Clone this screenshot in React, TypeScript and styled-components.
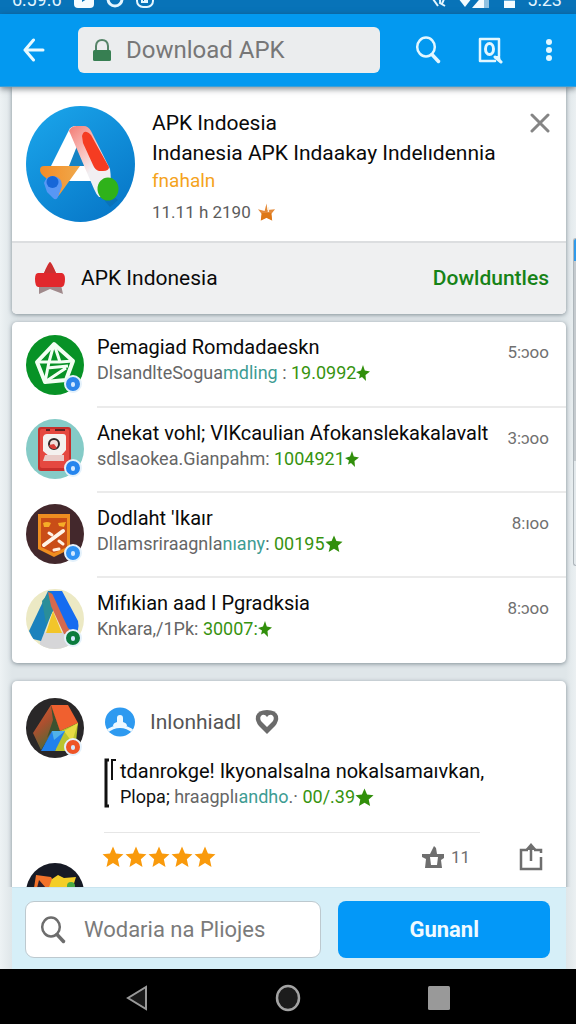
import React from "react";
import styled, { createGlobalStyle } from "styled-components";

const GlobalStyle = createGlobalStyle`
  * { box-sizing: border-box; }
  html, body { margin: 0; padding: 0; }
  body { font-family: Roboto, "Liberation Sans", sans-serif; background: #e9eff1; color: #0a0a0a; }
  button, input { font: inherit; }
  h2, h3, p, ul { margin: 0; padding: 0; font-weight: 400; }
  ul { list-style: none; }
`;

const Page = styled.div`
  position: relative;
  display: flex;
  flex-direction: column;
  height: 100vh;
  overflow: hidden;
`;

const StatusBar = styled.div`
  display: flex;
  align-items: flex-end;
  justify-content: space-between;
  flex: none;
  height: 14px;
  padding: 0 14px 6px 12px;
  overflow: hidden;
  background: #0873b8;
  color: #e4f6ff;
  font-size: 18px;
  line-height: 16px;
`;

const StatusGroup = styled.div`
  display: flex;
  align-items: flex-end;
  gap: 12px;
  svg { display: block; flex: none; }
`;

const AppBar = styled.header`
  position: relative;
  z-index: 1;
  display: flex;
  align-items: center;
  flex: none;
  height: 73px;
  padding: 0 17px 0 23px;
  background: #0399f0;
  border-bottom: 1px solid #3b9fd8;
  box-shadow: 0 2px 6px rgba(30, 40, 50, 0.55);
`;

const IconButton = styled.button`
  display: block;
  flex: none;
  padding: 0;
  border: 0;
  background: none;
  color: inherit;
  cursor: pointer;
  svg { display: block; }
`;

const BackButton = styled(IconButton)`
  color: #e9faff;
`;

const AddressField = styled.label`
  display: flex;
  align-items: center;
  flex: 1;
  min-width: 0;
  gap: 14px;
  height: 46px;
  margin: 0 35px 0 33px;
  padding: 0 14px;
  border-radius: 6px;
  background: #ebedee;
  svg { flex: none; }
`;

const TextInput = styled.input<{ $size: number; $color: string }>`
  flex: 1;
  min-width: 0;
  padding: 0;
  border: 0;
  outline: 0;
  background: none;
  font-size: ${(p) => p.$size}px;
  color: ${(p) => p.$color};
  &::placeholder { color: ${(p) => p.$color}; opacity: 1; }
`;

const BarActions = styled.div`
  display: flex;
  align-items: center;
  gap: 36px;
  color: #e2f7ff;
`;

const Content = styled.main`
  display: flex;
  flex-direction: column;
  flex: 1;
  min-height: 0;
  padding: 0 10px 0 12px;
  overflow: hidden;
  background: linear-gradient(90deg, #edf2f4 0, #dfe6e9 12px, #dfe6e9 calc(100% - 10px), #ebf0f2 100%);
`;

const Card = styled.section<{ $gap?: number; $flush?: boolean }>`
  flex: none;
  margin-bottom: ${(p) => p.$gap ?? 0}px;
  border-radius: ${(p) => (p.$flush ? "0 0 5px 5px" : "5px")};
  background: #fff;
  box-shadow: 0 1px 4px rgba(70, 85, 95, 0.6);
  overflow: hidden;
`;

const Hero = styled.div`
  display: flex;
  align-items: flex-start;
  height: 154px;
  padding: 19px 16px 0 14px;
`;

const HeroText = styled.div`
  flex: 1;
  min-width: 0;
  margin-left: 17px;
  padding-top: 2px;
  white-space: nowrap;
`;

const HeroLine = styled.h2`
  font-size: 21px;
  line-height: 30px;
`;

const HeroTag = styled.p`
  color: #f5a31c;
  font-size: 19px;
  line-height: 26px;
`;

const HeroMeta = styled.p`
  display: flex;
  align-items: center;
  gap: 6px;
  margin-top: 3px;
  color: #5c5c5c;
  font-size: 17px;
  line-height: 30px;
`;

const CloseButton = styled(IconButton)`
  margin-top: 7px;
  color: #858585;
`;

const SourceBar = styled.div`
  display: flex;
  align-items: center;
  height: 73px;
  padding: 0 17px 2px 22px;
  border-top: 2px solid #dcdee0;
  background: #eff0f1;
  font-size: 21px;
`;

const SourceName = styled.span`
  flex: 1;
  margin-left: 15px;
`;

const DownloadsLink = styled.a`
  color: #178317;
  font-weight: 500;
  text-decoration: none;
`;

const Row = styled.li`
  display: flex;
  padding-left: 14px;
`;

const AvatarBox = styled.div`
  position: relative;
  flex: none;
  width: 58px;
  height: 60px;
  margin-top: 13px;
  svg { display: block; }
  ${Row}:not(:first-child) & { margin-top: 11px; }
`;

const Badge = styled.span<{ $color: string }>`
  position: absolute;
  right: 2px;
  bottom: 2px;
  display: flex;
  align-items: center;
  justify-content: center;
  width: 18px;
  height: 18px;
  border: 2px solid #e4f1fb;
  border-radius: 50%;
  background: ${(p) => p.$color};
  &::after { content: ""; width: 4px; height: 5px; border-radius: 2px; background: #d3e9ff; }
`;

const RowBody = styled.div`
  display: flex;
  flex: 1;
  min-width: 0;
  height: 86px;
  margin-left: 13px;
  padding: 12px 17px 0 0;
  border-bottom: 2px solid #ebebeb;
  ${Row}:not(:first-child) & { height: 85px; }
  ${Row}:last-child & { border-bottom: 0; }
`;

const RowText = styled.div`
  flex: 1;
  min-width: 0;
  white-space: nowrap;
`;

const Title = styled.h3`
  font-size: 20px;
  line-height: 26px;
`;

const Subtitle = styled.p`
  display: flex;
  align-items: center;
  color: #666;
  font-size: 18px;
  line-height: 26px;
  white-space: pre;
  svg { flex: none; }
`;

const Teal = styled.span`
  color: #3d9c93;
`;

const Dark = styled.span`
  color: #111;
`;

const Count = styled.span`
  color: #37930f;
`;

const Time = styled.time`
  padding-top: 6px;
  color: #707070;
  font-size: 17px;
  line-height: 24px;
`;

const Review = styled.article`
  display: flex;
  padding: 4px 15px 0 14px;
`;

const ReviewBody = styled.div`
  flex: 1;
  min-width: 0;
  margin-left: 20px;
  padding-top: 20px;
`;

const Author = styled.div`
  display: flex;
  align-items: center;
  gap: 14px;
  height: 34px;
  color: #555;
  font-size: 21px;
`;

const Quote = styled.div`
  display: flex;
  gap: 4px;
  margin-top: 19px;
  white-space: nowrap;
  svg { flex: none; }
`;

const Rule = styled.hr`
  height: 1px;
  margin: 22px 71px 0 0;
  border: 0;
  background: #e6e6e6;
`;

const ReviewFooter = styled.div`
  display: flex;
  align-items: center;
  height: 47px;
  margin-left: -2px;
  padding-right: 8px;
  color: #6e6e6e;
`;

const Stars = styled.div`
  display: flex;
  flex: 1;
  gap: 1px;
`;

const LikeButton = styled(IconButton)`
  display: flex;
  align-items: center;
  gap: 6px;
  margin-right: 49px;
  font-size: 17px;
`;

const NextReview = styled(Review)`
  padding-top: 0;
  margin-top: -29px;
  ${AvatarBox} { margin-top: 12px; }
`;

const Feed = styled.div`
  display: flex;
  flex-direction: column;
  flex: 1;
  min-height: 0;
  overflow: hidden;
  margin: 0 -10px 0 -12px;
  padding: 0 10px 0 12px;
`;

const SearchBar = styled.form`
  display: grid;
  grid-template-columns: 297fr 212fr;
  flex: none;
  gap: 17px;
  height: 82px;
  padding: 13px 16px 11px 13px;
  background: #d6eff8;
  border-top: 1px solid #c9e4ef;
`;

const SearchField = styled.label`
  display: flex;
  align-items: center;
  min-width: 0;
  gap: 18px;
  padding: 0 14px;
  border: 1px solid #bdc9cf;
  border-radius: 9px;
  background: #fff;
  color: #6d6d6d;
  svg { flex: none; }
`;

const SubmitButton = styled.button`
  min-width: 0;
  padding: 0;
  border: 0;
  border-radius: 8px;
  background: #0398f8;
  color: #effaff;
  font-size: 22px;
  font-weight: 700;
  cursor: pointer;
`;

const NavBar = styled.nav`
  display: grid;
  grid-template-columns: repeat(3, 151px);
  justify-content: center;
  justify-items: center;
  align-items: center;
  flex: none;
  height: 55px;
  padding-top: 3px;
  background: #000;
`;

const ScrollTrack = styled.div`
  position: absolute;
  top: 238px;
  right: 0;
  width: 3px;
  height: 328px;
  border: 1px solid #aeb6bb;
  border-right: 0;
  border-radius: 3px 0 0 3px;
  background: linear-gradient(#2f9aea 0 22px, #c4cace 22px 222px, #e3e9ec 222px);
`;

const STAR = "M10 0.500 12.700 6.800 19.500 7.500 14.400 12 15.900 19 10 15.400 4.100 19 5.600 12 0.500 7.500 7.300 6.800Z";

function Star({ size = 20, color = "#f99a0c" }: { size?: number; color?: string }) {
  return (
    <svg width={size} height={size} viewBox="0 0 20 20" fill={color}>
      <path d={STAR} />
    </svg>
  );
}

function Spark() {
  return (
    <svg width="14" height="18" viewBox="0 0 14 18" fill="#318f0b">
      <path d="M7 1 8.800 6.500 14 7.500 9.500 11 10 17 6 13 3 14.500 4 10.500 0 8 5 6.500Z" />
    </svg>
  );
}

function Magnifier() {
  return (
    <svg width="26" height="28" viewBox="0 0 26 28" fill="none" stroke="currentColor" strokeWidth="2.500" strokeLinecap="round">
      <ellipse cx="11" cy="11" rx="8.800" ry="9.500" />
      <path d="M17 18.500 23.500 25.500" strokeWidth="3.500" />
    </svg>
  );
}

function HeroLogo() {
  return (
    <svg width="109" height="116" viewBox="0 0 109 116">
      <defs>
        <linearGradient id="sky" x1="0" y1="0" x2="0.700" y2="1">
          <stop offset="0" stopColor="#1ba7ec" /><stop offset="1" stopColor="#0879c9" />
        </linearGradient>
        <linearGradient id="leg" x1="0" y1="0" x2="0.600" y2="1">
          <stop offset="0" stopColor="#f37c74" /><stop offset="0.450" stopColor="#f9c5c2" /><stop offset="0.700" stopColor="#f1eff2" />
        </linearGradient>
        <linearGradient id="amber"><stop offset="0" stopColor="#f48c26" /><stop offset="1" stopColor="#efa94c" /></linearGradient>
      </defs>
      <ellipse cx="54.500" cy="58" rx="54.500" ry="58" fill="url(#sky)" />
      <path d="M80 84 92 94 84 101 70 84Z" fill="#0a67a8" opacity=".5" />
      <path d="M43 24Q45 20 50 20L66 75H40L24 62Z" fill="#fff" />
      <path d="M51 40 61 60H43Z" fill="#1583c5" />
      <path d="M43 25Q45 20 51 20H58Q62 20 65 25L84 63Q87 84 78 91H73Q70 88 68 83L44 27Z" fill="url(#leg)" />
      <path d="M56 30Q58 22 65 29L83 61Q83 65 77 65H73Q69 64 67 59L57 37Z" fill="#f53c22" />
      <path d="M14 64Q14 60 18 60H54L34 88Q30 94 27 88L20 72Q14 68 14 64Z" fill="url(#amber)" />
      <path d="M18 77Q20 70 28 70 36 72 36 80L32 91Q30 95 27 92L21 86Z" fill="#5797f5" />
      <circle cx="26.500" cy="76" r="6" fill="#1667d8" />
      <ellipse cx="82" cy="83" rx="10.500" ry="11.500" fill="#2fb21a" />
    </svg>
  );
}

type Art = "gem" | "vault" | "shield" | "peak" | "prism" | "fox";

const artBackground: Record<Art, string> = {
  gem: "#079226", vault: "#85cbc7", shield: "#43282c", peak: "#ece9c4", prism: "#292728", fox: "#171a25",
};

const artShapes: Record<Art, React.ReactNode> = {
  gem: (
    <>
      <path d="M28 9 47 26 40 45 19 47 11 27Z" fill="none" stroke="#f3fff3" strokeWidth="4" strokeLinejoin="round" />
      <path d="M28 9 23 27 11 27M28 9 34 27 47 26M23 27H34M23 27 19 47M21 33 42 31M19 47 40 33" fill="none" stroke="#f3fff3" strokeWidth="3" strokeLinejoin="round" />
    </>
  ),
  vault: (
    <>
      <rect x="12" y="8" width="33" height="44" rx="3" fill="#c72f2b" />
      <rect x="14" y="10" width="29" height="39" rx="2" fill="#e54840" />
      <path d="M20 11H24M29 11H39" stroke="#5c2222" strokeWidth="2" />
      <path d="M17 18Q18 15 21 15H37Q40 15 40 18V31L34 38H24L17 32Z" fill="#f4f1ef" />
      <circle cx="28" cy="25" r="5" fill="#f2dcd9" stroke="#2e2728" strokeWidth="2" />
      <path d="M23 26A5 5 0 0 0 31 29L28 25Z" fill="#d93d38" />
      <path d="M19 36H38V42H17Z" fill="#e9cbc7" />
    </>
  ),
  shield: (
    <>
      <path d="M12 10H44V45L28 53 12 45Z" fill="#ee8d20" />
      <path d="M15 14H41V43L28 49 15 43Z" fill="#c94d17" />
      <path d="M17 19Q21 17 25 19L23 23H18ZM32 19 40 18 38 23 33 22Z" fill="#f6ad27" />
      <path d="M18 41 37 27" stroke="#fff4e8" strokeWidth="4" strokeLinecap="round" />
      <path d="M23 29 26 31M33 37 37 40M28 46 33 45" stroke="#fff0e2" strokeWidth="3" strokeLinecap="round" />
    </>
  ),
  peak: (
    <>
      <path d="M14 43H44L42 60H14Z" fill="#d6d6d8" />
      <path d="M20 44 27 22 36 44Z" fill="#f2c529" />
      <path d="M22 2H27L28 18 15 52 7 50 3 42Z" fill="#1b82bd" />
      <path d="M16 12 24 3 28 20 20 35Z" fill="#2a8e99" />
      <path d="M22 3 29 6 46 46 38 45 25 17Z" fill="#d6694d" />
      <path d="M25 2H36L52 32Q54 43 48 44L42 39Z" fill="#156cf0" />
    </>
  ),
  prism: (
    <>
      <defs>
        <linearGradient id="prism-side" x1="0" y1="0" x2="0.500" y2="1">
          <stop offset="0" stopColor="#e2582c" /><stop offset="0.500" stopColor="#a8502f" /><stop offset="1" stopColor="#4d6a35" />
        </linearGradient>
      </defs>
      <path d="M25 7 7 35 15 52 27 33 34 32Z" fill="url(#prism-side)" />
      <path d="M25 7 34 33H26L21 40 27 22Z" fill="#3c5230" />
      <path d="M25 7H42L52 25 34 33Z" fill="#f0602f" />
      <path d="M34 33 52 25 49 53H29Z" fill="#b9c42e" />
      <path d="M38 33 52 25 46 44Z" fill="#e6dc45" />
      <path d="M26 33H39L29 53H15Z" fill="#2081ec" />
      <path d="M26 33H39L28 42Z" fill="#51b2e8" />
    </>
  ),
  fox: (
    <>
      <path d="M10 12 25 14 31 25H8Z" fill="#f2722a" />
      <path d="M13 17 20 25H11Z" fill="#30202b" />
      <path d="M26 16 32 12 38 15 50 14 46 27H22Z" fill="#f4ce28" />
      <circle cx="45" cy="23" r="4" fill="#49aa45" />
    </>
  ),
};

function Avatar({ art, badge }: { art: Art; badge?: string }) {
  return (
    <AvatarBox>
      <svg width="58" height="60" viewBox="0 0 58 60">
        <clipPath id={`clip-${art}`}><ellipse cx="29" cy="30" rx="29" ry="30" /></clipPath>
        <g clipPath={`url(#clip-${art})`}>
          <rect width="58" height="60" fill={artBackground[art]} />
          {artShapes[art]}
        </g>
      </svg>
      {badge && <Badge $color={badge} />}
    </AvatarBox>
  );
}

interface Item {
  art: Art;
  badge: string;
  title: string;
  text: string;
  teal?: string;
  end: string;
  count: string;
  time: string;
  star?: boolean;
}

const items: Item[] = [
  { art: "gem", badge: "#2d86ea", title: "Pemagiad Romdadaeskn", text: "DlsandlteSogua", teal: "mdling", end: " : ", count: "19.0992", time: "5:ɔoo" },
  { art: "vault", badge: "#2585ee", title: "Anekat vohl; VIKcaulian Afokanslekakalavalt", text: "sdlsaokea.Gianpahm", end: ": ", count: "1004921", time: "3:ɔoo" },
  { art: "shield", badge: "#2f92f4", title: "Dodlaht 'Ikaır", text: "Dllamsriraagnla", teal: "nıany", end: ": ", count: "00195", time: "8:ıoo", star: true },
  { art: "peak", badge: "#0a7c3d", title: "Mifıkian aad I Pgradksia", text: "Knkara,/1Pk", end: ": ", count: "30007:", time: "8:ɔoo" },
];

export default function App() {
  return (
    <Page>
      <GlobalStyle />
      <StatusBar>
        <StatusGroup>
          <span>6:59.6</span>
          <svg width="20" height="18" viewBox="0 0 20 18"><rect width="20" height="18" rx="4" fill="#f4fcff" /><path d="M8 6 13 9 8 12Z" fill="#0873b8" /></svg>
          <svg width="18" height="18" viewBox="0 0 18 18" fill="none" stroke="#e4f6ff" strokeWidth="3"><circle cx="9" cy="9" r="7" /></svg>
          <svg width="18" height="18" viewBox="0 0 18 18" fill="none" stroke="#e4f6ff" strokeWidth="2"><rect x="1" y="1" width="16" height="16" rx="6" /><path d="M6 6V12H11V6M9 8V13" /></svg>
        </StatusGroup>
        <StatusGroup>
          <svg width="14" height="18" viewBox="0 0 14 18" fill="none" stroke="#e4f6ff" strokeWidth="2"><path d="M1 9 6 16M3 6Q9 7 8 13L13 16M12 9 10 14" /></svg>
          <svg width="34" height="18" viewBox="0 0 34 18"><path d="M0 8H14L7 17Z" fill="#f4fcff" /><path d="M14 18 26 4V18Z" fill="#f4fcff" /><path d="M26 4H31V18H26Z" fill="#8fc2e2" /></svg>
          <svg width="11" height="18" viewBox="0 0 11 18"><path d="M0 2H11V18H0Z" fill="#f4fcff" /><path d="M0 7H11V11H0Z" fill="#67aedb" /></svg>
          <span>5:23</span>
        </StatusGroup>
      </StatusBar>

      <AppBar>
        <BackButton aria-label="Back">
          <svg width="22" height="24" viewBox="0 0 22 24" fill="none" stroke="currentColor" strokeWidth="3" strokeLinecap="round" strokeLinejoin="round">
            <path d="M10.500 2 2 12 10.500 22M2 12H20" />
          </svg>
        </BackButton>
        <AddressField>
          <svg width="20" height="24" viewBox="0 0 20 24">
            <path d="M4 12V8Q4.500 2 10 2 15.500 2 16 8V12" fill="none" stroke="#568468" strokeWidth="2" />
            <rect x="1" y="12" width="18" height="11" rx="1.500" fill="#377f52" />
          </svg>
          <TextInput $size={24} $color="#777" aria-label="Address" placeholder="Download APK" />
        </AddressField>
        <BarActions>
          <IconButton aria-label="Search"><Magnifier /></IconButton>
          <IconButton aria-label="Find in page">
            <svg width="26" height="28" viewBox="0 0 26 28" fill="none" stroke="currentColor" strokeWidth="2.500" strokeLinecap="round" strokeLinejoin="round">
              <path d="M22 20V3H3V25H18" />
              <ellipse cx="12.500" cy="13" rx="4" ry="5.500" strokeWidth="3" />
              <path d="M18 21 24 26" strokeWidth="3" />
              <path d="M17 20H23L24 26Z" fill="currentColor" stroke="none" />
            </svg>
          </IconButton>
          <IconButton aria-label="More options">
            <svg width="20" height="26" viewBox="0 0 20 26" fill="currentColor"><circle cx="10" cy="5" r="3" /><circle cx="10" cy="13" r="3" /><circle cx="10" cy="21" r="3" /></svg>
          </IconButton>
        </BarActions>
      </AppBar>

      <Content>
        <Feed>
          <Card $gap={8} $flush>
            <Hero>
              <HeroLogo />
              <HeroText>
                <HeroLine>APK Indoesia</HeroLine>
                <HeroLine>Indanesia APK Indaakay Indelıdennia</HeroLine>
                <HeroTag>fnahaln</HeroTag>
                <HeroMeta>
                  11.11 h 2190
                  <svg width="19" height="20" viewBox="0 0 20 20">
                    <path d="M10 1 11 8 19 7 15 12 16 19 10 16 4 19 5 12 1 7 8 9Z" fill="#e48a3a" />
                    <path d="M5 11H15L16 19 10 16 4 19Z" fill="#de7817" />
                    <path d="M12 5V10" stroke="#fff0d8" strokeWidth="1.500" />
                  </svg>
                </HeroMeta>
              </HeroText>
              <CloseButton aria-label="Close">
                <svg width="20" height="20" viewBox="0 0 20 20" fill="none" stroke="currentColor" strokeWidth="3" strokeLinecap="round"><path d="M2 2 18 18M18 2 2 18" /></svg>
              </CloseButton>
            </Hero>
            <SourceBar>
              <svg width="32" height="34" viewBox="0 0 32 34">
                <path d="M5 24H27L29 33 16 28 5 33Z" fill="#a08a8c" />
                <path d="M16 1Q18 2 22 12H28Q31 13 31 18 31 25 28 26H4Q1 25 1 18 1 12 4 12H10Q14 2 16 1Z" fill="#e1282c" />
                <path d="M16 1 22 12H10Z" fill="#c93131" />
              </svg>
              <SourceName>APK Indonesia</SourceName>
              <DownloadsLink href="#downloads">Dowlduntles</DownloadsLink>
            </SourceBar>
          </Card>

          <Card $gap={18}>
            <ul>
              {items.map((item) => (
                <Row key={item.art}>
                  <Avatar art={item.art} badge={item.badge} />
                  <RowBody>
                    <RowText>
                      <Title>{item.title}</Title>
                      <Subtitle>
                        {item.text}
                        {item.teal && <Teal>{item.teal}</Teal>}
                        {item.end}
                        <Count>{item.count}</Count>
                        {item.star ? <Star size={18} color="#318f0b" /> : <Spark />}
                      </Subtitle>
                    </RowText>
                    <Time>{item.time}</Time>
                  </RowBody>
                </Row>
              ))}
            </ul>
          </Card>

          <Card>
            <Review>
              <Avatar art="prism" badge="#ee5426" />
              <ReviewBody>
                <Author>
                  <svg width="32" height="30" viewBox="0 0 32 30">
                    <clipPath id="author-clip"><ellipse cx="16" cy="15" rx="15" ry="14.500" /></clipPath>
                    <g clipPath="url(#author-clip)">
                      <rect width="32" height="30" fill="#2e9af0" />
                      <path d="M13 15V11Q13 8 16 8 19 8 19 11V15Q23 16 23 19H9Q9 16 13 15Z" fill="#eef9ff" />
                      <path d="M2 25Q16 14 30 25" fill="none" stroke="#eef9ff" strokeWidth="3" />
                    </g>
                  </svg>
                  <span>Inlonhiadl</span>
                  <svg width="24" height="26" viewBox="0 0 24 26">
                    <path d="M12 25 4 17Q0 12 1 7 3 1 12 1 21 1 23 7 24 12 20 17Z" fill="#6b6b6b" />
                    <path d="M12 18 6 12Q4 8 7 6 10 5 12 8 14 5 17 6 20 8 18 12Z" fill="#fff" />
                  </svg>
                </Author>
                <Quote>
                  <svg width="12" height="50" viewBox="0 0 12 50" fill="none" stroke="#111" strokeWidth="2">
                    <path d="M5 2H2V48H5" strokeWidth="3" />
                    <path d="M12 2H8V22" />
                  </svg>
                  <div>
                    <Title>tdanrokge! Ikyonalsalna nokalsamaıvkan,</Title>
                    <Subtitle><Dark>Plopa; </Dark>hraagplı<Teal>andho</Teal>.· <Count>00/.39</Count><Star size={19} color="#318f0b" /></Subtitle>
                  </div>
                </Quote>
                <Rule />
                <ReviewFooter>
                  <Stars role="img" aria-label="5 stars">
                    {[1, 2, 3, 4, 5].map((n) => <Star key={n} size={22} />)}
                  </Stars>
                  <LikeButton aria-label="Like">
                    <svg width="24" height="24" viewBox="0 0 24 24" fill="currentColor">
                      <path fillRule="evenodd" d="M13 1 15 3 16 9H23V13L20 15 21 23H4L5 14 1 12V9H9ZM9 12 10 20H16L17 12Z" />
                    </svg>
                    <span>11</span>
                  </LikeButton>
                  <IconButton aria-label="Share">
                    <svg width="24" height="28" viewBox="0 0 24 28" fill="none" stroke="currentColor">
                      <path d="M9 7H2V26H22V14M15 7H22V10M12 3V18" strokeWidth="2.500" />
                      <path d="M12 0 18 7H6Z" fill="currentColor" stroke="none" />
                    </svg>
                  </IconButton>
                </ReviewFooter>
              </ReviewBody>
            </Review>
            <NextReview><Avatar art="fox" /></NextReview>
          </Card>
        </Feed>

        <SearchBar onSubmit={(e) => e.preventDefault()}>
          <SearchField>
            <Magnifier />
            <TextInput $size={22} $color="#7b7b7b" aria-label="Search files" placeholder="Wodaria na Pliojes" />
          </SearchField>
          <SubmitButton type="submit">Gunanl</SubmitButton>
        </SearchBar>
      </Content>

      <NavBar>
        <IconButton aria-label="Back">
          <svg width="22" height="26" viewBox="0 0 22 26"><path d="M20 2V24L2 13Z" fill="#191919" stroke="#999" strokeWidth="2" /></svg>
        </IconButton>
        <IconButton aria-label="Home">
          <svg width="26" height="28" viewBox="0 0 26 28"><ellipse cx="13" cy="14" rx="11" ry="12" fill="#1c1c1c" stroke="#a3a3a3" strokeWidth="2.500" /></svg>
        </IconButton>
        <IconButton aria-label="Overview">
          <svg width="22" height="24" viewBox="0 0 22 24"><rect width="22" height="24" rx="1.500" fill="#999" /></svg>
        </IconButton>
      </NavBar>
      <ScrollTrack />
    </Page>
  );
}
